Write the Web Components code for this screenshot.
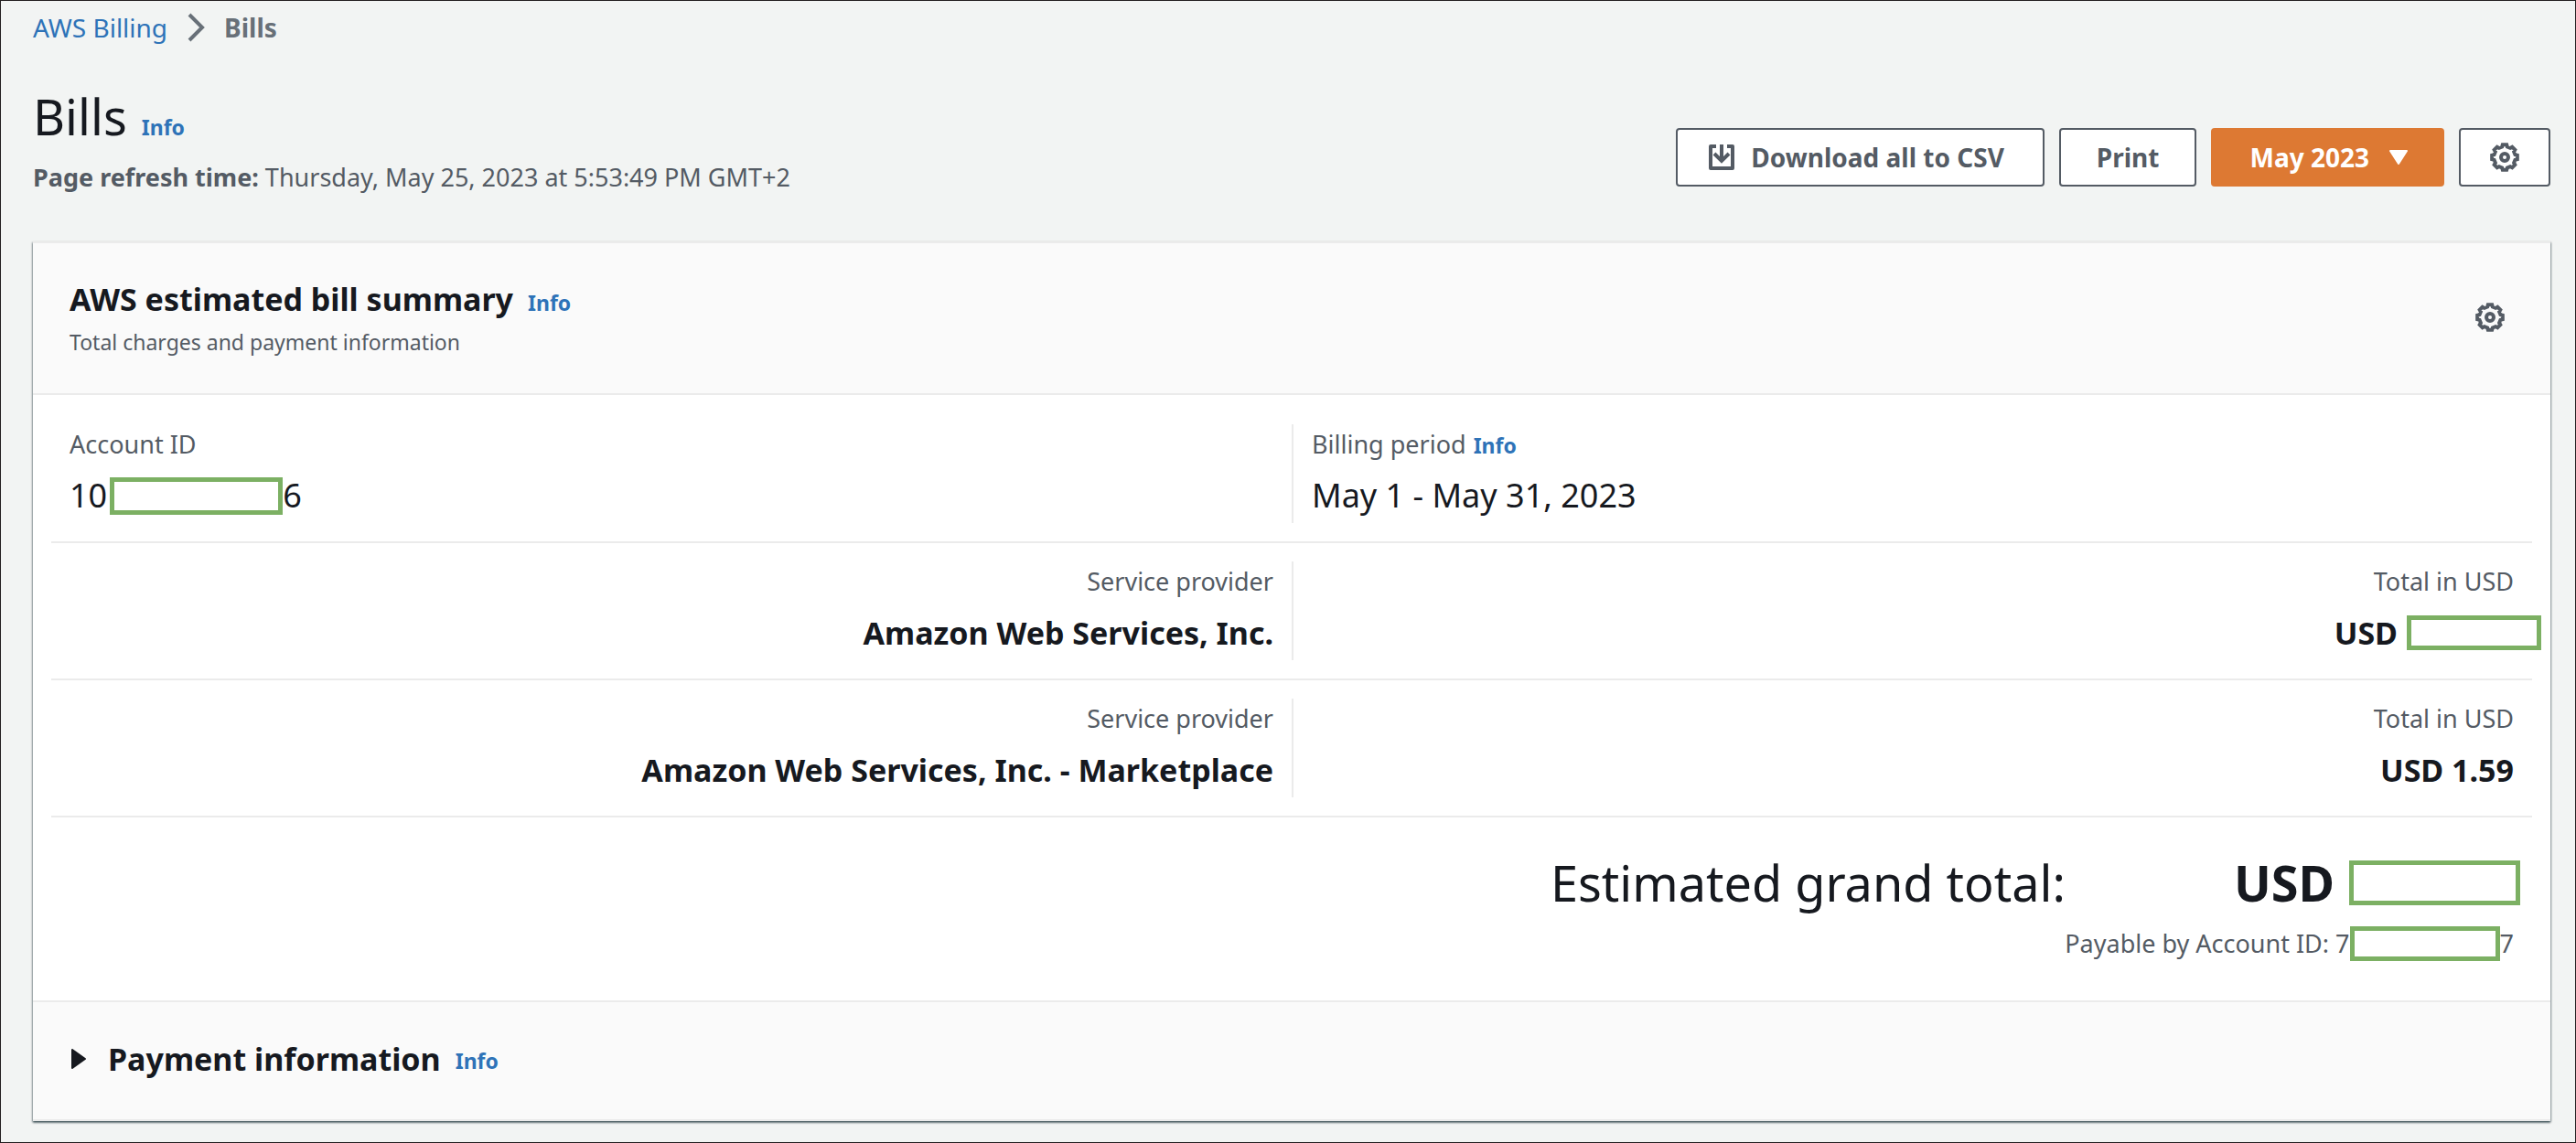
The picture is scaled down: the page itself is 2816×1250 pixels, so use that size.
<!DOCTYPE html>
<html lang="en">
<head>
<meta charset="utf-8">
<title>Bills</title>
<style>
  html { height: 100%; }
  body {
    margin: 0;
    box-sizing: border-box;
    min-height: 100%;
    border: 1px solid #231f20;
    background: #f2f4f3;
    color: #16191f;
    font: 27px/44px "Noto Sans", "Open Sans", sans-serif;
    --muted: #545b64;
    --link: #2e73b8;
    --line: #ebebeb;
    --shade: #fafafa;
  }
</style>
</head>
<body>
<bills-page></bills-page>
<script>
const define = (name, html, setup) => {
  const template = document.createElement('template');
  template.innerHTML = html;
  customElements.define(name, class extends HTMLElement {
    connectedCallback() {
      if (this.shadowRoot) return;
      const root = this.attachShadow({ mode: 'open' });
      root.append(template.content.cloneNode(true));
      if (setup) setup(this, root);
    }
  });
};

/* Outline of an eight-toothed cog centred in a 16-unit box. */
const cogPath = () => {
  const points = [];
  for (let tooth = 0; tooth < 8; tooth++) {
    for (const [offset, radius] of [[-9, 7], [9, 7], [14, 5.9], [31, 5.9]]) {
      const angle = (tooth * 45 + offset - 90) * Math.PI / 180;
      points.push((8 + radius * Math.cos(angle)).toFixed(2) + ' ' + (8 + radius * Math.sin(angle)).toFixed(2));
    }
  }
  return 'M' + points.join('L') + 'Z';
};

const icons = {
  gear: `<svg width="32" height="32" viewBox="0 0 16 16" fill="none" stroke="currentColor" stroke-width="2"><path d="${cogPath()}"/><circle cx="8" cy="8" r="2"/></svg>`,
  download: '<svg width="28" height="28" viewBox="0 0 28 28" fill="none" stroke="currentColor" stroke-width="4"><path stroke-linejoin="round" d="M8 2H2V26H26V2H20M14 0V18"/><path d="M6 10l8 8 8-8"/></svg>',
  down: '<svg width="20" height="16" viewBox="0 0 20 16" fill="currentColor" stroke="currentColor" stroke-width="2" stroke-linejoin="round"><path d="M1 1H19L10 15Z"/></svg>',
  right: '<svg width="16" height="22" viewBox="0 0 16 22" fill="currentColor" stroke="currentColor" stroke-width="2" stroke-linejoin="round"><path d="M1 1V21L15 11Z"/></svg>',
  chevron: '<svg width="20" height="32" viewBox="0 0 20 32" fill="none" stroke="currentColor" stroke-width="4"><path d="M3 2L17 16 3 30"/></svg>'
};

define('aws-icon', '<style>:host{display:inline-flex;flex:none}svg{display:block}</style>',
  (host, root) => root.append(document.createRange().createContextualFragment(icons[host.getAttribute('name')])));

define('info-link', `<style>
  a { color: var(--link); font-size: 23px; font-weight: 700; line-height: 32px; text-decoration: none; }
</style><a href="#info">Info</a>`);

define('aws-button', `<style>
  :host { display: block; }
  button {
    display: flex; align-items: center; justify-content: center; gap: 18px;
    box-sizing: border-box; min-width: 100px; height: 64px; padding: 0 39px;
    border: 2px solid var(--muted); border-radius: 4px;
    background: #fff; color: var(--muted);
    font: 700 28px/44px "Noto Sans", "Open Sans", sans-serif;
  }
  :host([primary]) button { gap: 22px; padding: 0 38px 0 40px; border-color: #dd7933; background: #dd7933; color: #fff; }
  :host([leading]) button { padding: 0 42px 0 34px; }
  :host([square]) button { padding: 0; }
</style><button type="button"><slot></slot></button>`,
  (host, root) => {
    if (host.hasAttribute('label')) root.querySelector('button').setAttribute('aria-label', host.getAttribute('label'));
  });

/* Blanked-out value: a white box with a green outline. */
define('masked-value', `<style>
  :host {
    display: block; flex: none; box-sizing: border-box;
    width: var(--mask-width); height: var(--mask-height);
    border: 5px solid #7cb063; background: #fff;
  }
</style>`);

define('bread-crumbs', `<style>
  :host { display: block; font-size: 28px; line-height: 42px; }
  nav { display: flex; align-items: center; gap: 21px; color: #687078; }
  a { color: var(--link); text-decoration: none; }
</style>
<nav aria-label="Breadcrumbs"><a href="#billing">AWS Billing</a><aws-icon name="chevron"></aws-icon><b>Bills</b></nav>`);

define('page-header', `<style>
  :host { display: flex; justify-content: space-between; align-items: flex-end; }
  .title { display: flex; align-items: baseline; gap: 16px; margin-bottom: 8px; }
  h1 { margin: 0; font-size: 54px; font-weight: 400; line-height: 74px; }
  p { margin: 0; color: var(--muted); }
  .actions { display: flex; gap: 16px; padding-bottom: 12px; }
</style>
<div>
  <div class="title"><h1>Bills</h1><info-link></info-link></div>
  <p><slot></slot></p>
</div>
<div class="actions">
  <aws-button leading><aws-icon name="download"></aws-icon>Download all to CSV</aws-button>
  <aws-button>Print</aws-button>
  <aws-button primary>May 2023<aws-icon name="down"></aws-icon></aws-button>
  <aws-button square label="Settings"><aws-icon name="gear"></aws-icon></aws-button>
</div>`);

define('summary-field', `<style>
  :host { display: flex; flex-direction: column; gap: 4px; padding: 0 20px; }
  :host([end]) { align-items: flex-end; }
  .label { display: flex; align-items: baseline; gap: 8px; color: var(--muted); line-height: 44px; }
  .value { display: flex; align-items: center; font-size: 36px; line-height: 60px; }
  :host([strong]) .value { font-size: 34px; font-weight: 700; }
</style>
<div class="label"><slot name="label"></slot></div>
<div class="value"><slot></slot></div>`);

define('summary-row', `<style>
  :host { display: grid; grid-template-columns: 1fr 1fr; padding: 20px 0; border-bottom: 2px solid var(--line); }
  ::slotted(:last-child) { border-left: 2px solid var(--line); }
</style><slot></slot>`);

define('grand-total', `<style>
  :host { display: flex; flex-direction: column; align-items: flex-end; gap: 8px; padding: 34px 20px 40px; }
  .total { display: flex; gap: 184px; font-size: 54px; line-height: 74px; }
  .amount { display: flex; align-items: center; gap: 16px; margin-right: -7px; --mask-width: 187px; --mask-height: 49px; }
  .payer { display: flex; align-items: center; color: var(--muted); --mask-width: 164px; --mask-height: 38px; }
</style>
<div class="total"><span>Estimated grand total:</span><span class="amount"><b>USD</b><masked-value></masked-value></span></div>
<div class="payer"><span>Payable by Account ID: 7</span><masked-value></masked-value><span>7</span></div>`);

define('bill-summary', `<style>
  :host {
    display: block; background: #fff;
    border-top: 2px solid var(--line); border-bottom: 2px solid var(--line);
    box-shadow: 0 2px 2px 0 rgba(0,28,36,.45), 1px 1px 2px 0 rgba(0,28,36,.3), -1px 1px 2px 0 rgba(0,28,36,.3);
  }
  header { display: flex; align-items: center; justify-content: space-between; padding: 37px 50px 40px 40px; background: var(--shade); border-bottom: 2px solid var(--line); }
  .heading { display: flex; align-items: baseline; gap: 16px; }
  h2 { margin: 0; font-size: 34px; font-weight: 700; line-height: 48px; }
  p { margin: 6px 0 0; color: var(--muted); font-size: 23px; line-height: 32px; }
  button { display: flex; align-items: center; padding: 0; border: 0; background: none; color: inherit; font: inherit; }
  header button { color: var(--muted); }
  .body { padding: 12px 20px 0; }
  .account { --mask-width: 189px; --mask-height: 41px; }
  .account masked-value { margin-left: 3px; }
  .amount { --mask-width: 147px; --mask-height: 38px; }
  .amount masked-value { margin: 0 -30px 0 10px; }
  footer { padding: 38px 42px 42px; background: var(--shade); border-top: 2px solid var(--line); }
  footer button { gap: 24px; }
</style>
<header>
  <div>
    <div class="heading"><h2>AWS estimated bill summary</h2><info-link></info-link></div>
    <p>Total charges and payment information</p>
  </div>
  <button type="button" aria-label="Summary settings"><aws-icon name="gear"></aws-icon></button>
</header>
<div class="body">
  <summary-row>
    <summary-field class="account"><span slot="label">Account ID</span><span>10</span><masked-value></masked-value><span>6</span></summary-field>
    <summary-field><span slot="label">Billing period</span><info-link slot="label"></info-link>May 1 - May 31, 2023</summary-field>
  </summary-row>
  <summary-row>
    <summary-field end strong><span slot="label">Service provider</span>Amazon Web Services, Inc.</summary-field>
    <summary-field end strong class="amount"><span slot="label">Total in USD</span><span>USD</span><masked-value></masked-value></summary-field>
  </summary-row>
  <summary-row>
    <summary-field end strong><span slot="label">Service provider</span>Amazon Web Services, Inc. - Marketplace</summary-field>
    <summary-field end strong><span slot="label">Total in USD</span>USD 1.59</summary-field>
  </summary-row>
  <grand-total></grand-total>
</div>
<footer>
  <div class="heading"><h2><button type="button" aria-expanded="false"><aws-icon name="right"></aws-icon>Payment information</button></h2><info-link></info-link></div>
</footer>`);

define('bills-page', `<style>
  :host { display: block; padding: 8px 27px 20px 35px; }
  page-header { margin: 39px 0 48px; }
</style>
<bread-crumbs></bread-crumbs>
<page-header><b>Page refresh time:</b> Thursday, May 25, 2023 at 5:53:49 PM GMT+2</page-header>
<bill-summary></bill-summary>`);
</script>
</body>
</html>
